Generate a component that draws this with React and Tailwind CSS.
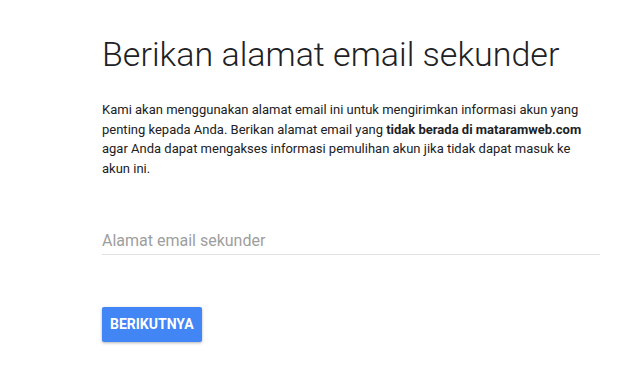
import React, { useState } from "react";

export default function App() {
    const [email, setEmail] = useState("");

    return (
        <div className="min-h-screen bg-white font-['Roboto',sans-serif]">
            <div className="w-[498px] ml-[102px] pt-[30px]">
                <h1 className="text-[34px] font-light leading-[48px] text-[#202124]">Berikan alamat email sekunder</h1>
                <p className="mt-[22px] text-[13px] leading-[19.5px] text-[#202124] pr-[14px]">
                    Kami akan menggunakan alamat email ini untuk mengirimkan informasi akun yang penting kepada Anda. Berikan alamat email yang <b className="font-bold">tidak berada di mataramweb.com</b> agar Anda dapat mengakses informasi pemulihan akun jika tidak dapat masuk ke akun ini.
                </p>
                <input
                    value={email}
                    onChange={(e) => setEmail(e.target.value)}
                    placeholder="Alamat email sekunder"
                    className="mt-[52px] w-full border-b border-[#e0e0e0] pb-[2px] text-[16px] leading-[22px] outline-none placeholder:text-[#9e9e9e]"
                />
                <button className="mt-[52px] h-[35px] px-[8px] bg-[#4285f4] text-white text-[14px] font-bold rounded-[2px] shadow-[0_1px_3px_rgba(0,0,0,0.3)]">
                    BERIKUTNYA
                </button>
            </div>
        </div>
    );
}
